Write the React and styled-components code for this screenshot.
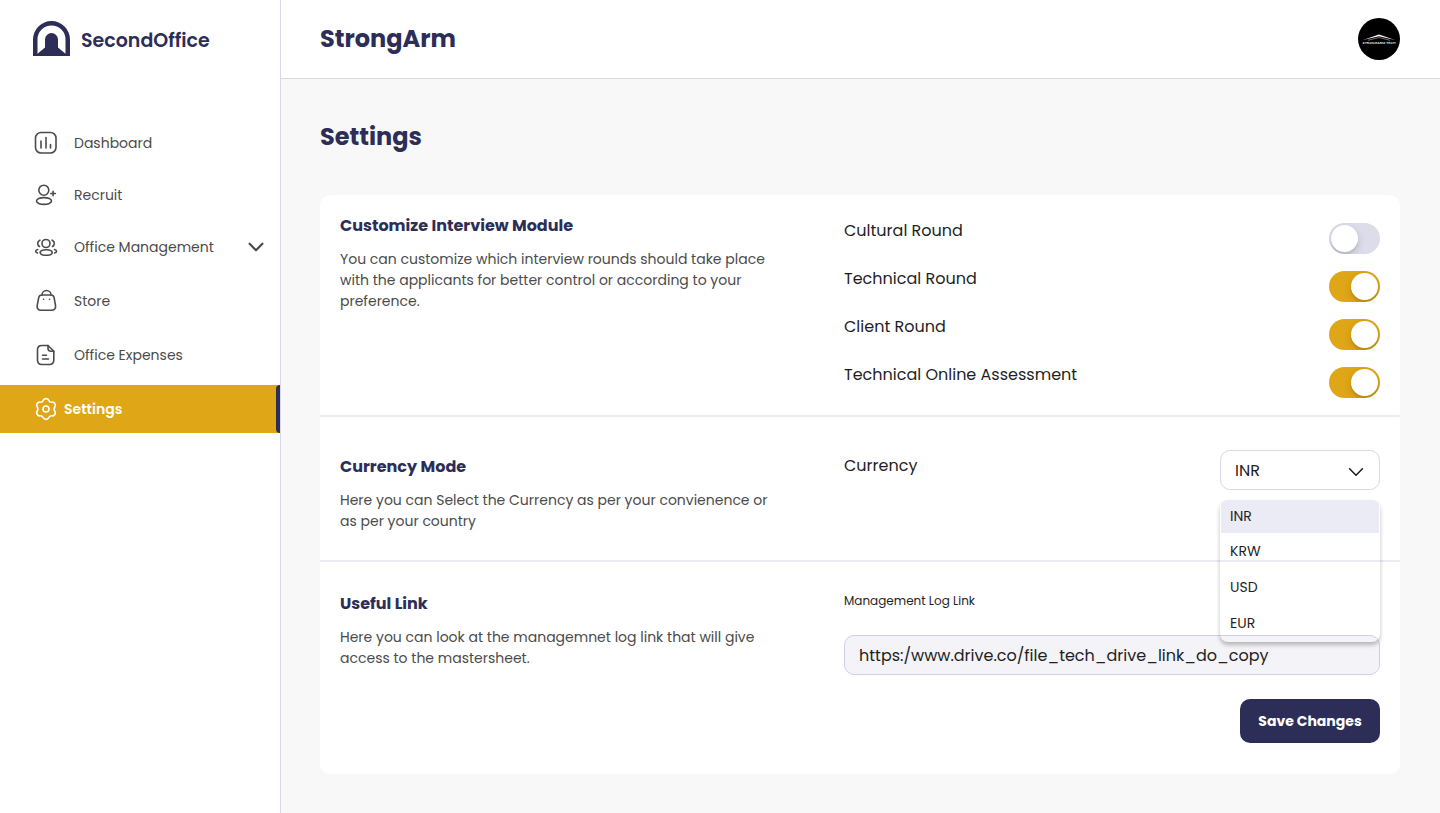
import React, { useState } from 'react';
import styled, { createGlobalStyle, css } from 'styled-components';

const GlobalStyle = createGlobalStyle`
    * {
        box-sizing: border-box;
    }

    body {
        margin: 0;
        background: #f8f8f8;
        color: #1f1f1f;
        font-family: Poppins, Inter, sans-serif;
        font-size: 16px;
    }

    button, input, select {
        font: inherit;
        color: inherit;
    }
`;

const Page = styled.div`
    display: flex;
    min-height: 100vh;
`;

const Sidebar = styled.aside`
    flex: 0 0 281px;
    background: #fff;
    border-right: 1px solid #d8d8e8;
`;

const Brand = styled.a`
    display: flex;
    align-items: flex-end;
    gap: 11px;
    padding: 21px 0 0 33px;
    color: #2c2e58;
    font-size: 19px;
    font-weight: 600;
    line-height: 30px;
    text-decoration: none;
`;

const Nav = styled.nav`
    display: flex;
    flex-direction: column;
    gap: 6px;
    margin-top: 63px;
`;

const NavGroup = styled.div`
    display: flex;
    flex-direction: column;
    gap: ${props => props.$gap};
`;

const NavLink = styled.a`
    display: flex;
    align-items: center;
    gap: 16px;
    height: 48px;
    padding: 0 13px 0 34px;
    color: #4b4b4b;
    font-size: 14px;
    text-decoration: none;

    ${props => props.$active && css`
        position: relative;
        gap: 6px;
        background: #dfa717;
        color: #fff;
        font-weight: 600;

        &::after {
            content: '';
            position: absolute;
            top: 0;
            right: 0;
            bottom: 0;
            width: 4px;
            border-radius: 4px 0 0 4px;
            background: #2c2e58;
        }
    `}
`;

const NavLabel = styled.span`
    flex: 1;
`;

const Main = styled.div`
    flex: 1;
    min-width: 0;
`;

const TopBar = styled.header`
    display: flex;
    align-items: center;
    justify-content: space-between;
    height: 79px;
    padding: 0 40px 0 39px;
    background: #fff;
    border-bottom: 1px solid #d8d8e8;
`;

const Heading = styled.div`
    margin: 0;
    color: #2c2e58;
    font-size: 24px;
    font-weight: 700;
    line-height: 36px;
`;

const Content = styled.main`
    padding: 40px 40px 40px 39px;
`;

const Card = styled.form`
    margin-top: 40px;
    border-radius: 10px;
    background: #fff;
`;

const Section = styled.section`
    display: grid;
    grid-template-columns: 7fr 8fr;
    column-gap: 35px;
    min-height: ${props => props.$height};
    padding: ${props => props.$padding};

    & + & {
        border-top: 2px solid #ebebf3;
    }
`;

const Intro = styled.div`
    padding-top: ${props => props.$top || 0};
`;

const SectionTitle = styled.h2`
    margin: 0 0 12px;
    color: #2c2e58;
    font-size: 16px;
    font-weight: 700;
    line-height: 22px;
`;

const Description = styled.p`
    max-width: 436px;
    margin: 0;
    color: #4b4b4b;
    font-size: 14px;
    line-height: 21px;
`;

const Rounds = styled.div`
    display: flex;
    flex-direction: column;
    gap: 17px;
    padding-top: 8px;
`;

const Row = styled.div`
    display: flex;
    align-items: flex-start;
    justify-content: space-between;
`;

const RowLabel = styled.label`
    line-height: ${props => props.$tall ? '32px' : '16px'};
`;

const Toggle = styled.input.attrs({ type: 'checkbox', role: 'switch' })`
    appearance: none;
    display: flex;
    width: 51px;
    height: 31px;
    margin: 0;
    padding: 2px;
    border-radius: 16px;
    background: #dcdcea;
    overflow: hidden;
    cursor: pointer;

    &::before {
        content: '';
        width: 27px;
        height: 27px;
        border-radius: 50%;
        background: #fff;
        box-shadow: 0 3px 8px rgba(0, 0, 0, 0.15), 0 3px 1px rgba(0, 0, 0, 0.06);
    }

    &:checked {
        justify-content: flex-end;
        background: #dfa717;
    }
`;

const SelectBox = styled.div`
    position: relative;
    width: 160px;

    > svg {
        position: absolute;
        top: 11px;
        right: 13px;
        pointer-events: none;
    }
`;

const Select = styled.select`
    appearance: none;
    width: 100%;
    height: 40px;
    padding: 0 14px;
    border: 1px solid #d8d8e8;
    border-radius: 10px;
    background: #fff;
`;

const Menu = styled.ul`
    position: absolute;
    top: 50px;
    left: 0;
    right: 0;
    z-index: 1;
    margin: 0;
    padding: 0 1px 1px;
    border-radius: 8px;
    box-shadow: 0 3px 4px rgba(0, 0, 0, 0.25);
    list-style: none;
`;

const Option = styled.li`
    height: 36px;
    padding: 0 9px;
    font-size: 14px;
    line-height: 36px;
    cursor: pointer;

    &:first-child {
        height: 33px;
        border-radius: 6px 6px 0 0;
        line-height: 33px;
    }

    ${props => props.$selected && css`
        background: #ebebf5;
    `}
`;

const LinkField = styled.div`
    display: flex;
    flex-direction: column;
    align-items: flex-end;
`;

const LinkLabel = styled.label`
    align-self: stretch;
    margin-bottom: 26px;
    font-size: 12px;
    line-height: 16px;
`;

const LinkInput = styled.input`
    width: 100%;
    height: 40px;
    padding: 0 14px;
    border: 1px solid #d1d1e6;
    border-radius: 10px;
    background: #f3f3f8;
`;

const SaveButton = styled.button`
    width: 140px;
    height: 44px;
    margin-top: 24px;
    padding: 0;
    border: 0;
    border-radius: 10px;
    background: #2c2e58;
    color: #fff;
    font-size: 14px;
    font-weight: 700;
    cursor: pointer;
`;

const Icon = ({ size = 24, width = 1.6, children }) => (
    <svg
        width={size}
        height={size}
        viewBox="0 0 24 24"
        fill="none"
        stroke="currentColor"
        strokeWidth={width}
        strokeLinecap="round"
        strokeLinejoin="round"
        aria-hidden="true"
    >
        {children}
    </svg>
);

const Logo = () => (
    <svg width="37" height="35" viewBox="0 0 37 35" fill="#2c2e58" aria-hidden="true">
        <path
            fillRule="evenodd"
            d="M0 35V18.500a18.500 18.500 0 0 1 37 0V35ZM4.500 32.800 12 26.500V18.500a6.500 6.500 0 0 1 13 0V26.500l7.500 6.300V18.500a14 14 0 0 0-28 0Z"
        />
    </svg>
);

const DashboardIcon = () => (
    <Icon>
        <rect x="1.5" y="1.5" width="20.5" height="20.5" rx="5.5" />
        <path d="M7 10v7M12 6.500v10.500M16.500 13.500v3.500" />
    </Icon>
);

const RecruitIcon = () => (
    <Icon>
        <circle cx="9.8" cy="7.2" r="5" />
        <ellipse cx="10" cy="18" rx="7.500" ry="3.400" />
        <path d="M16.800 10.500h4.600M19.100 8.200v4.600" />
    </Icon>
);

const OfficeIcon = () => (
    <Icon>
        <circle cx="12" cy="8.500" r="4" />
        <ellipse cx="12.200" cy="17.500" rx="6" ry="2.800" />
        <path d="M5.500 11.500c-2.500-1.500-2.500-5 .4-6.300M18.500 11.500c2.500-1.500 2.500-5-.4-6.300M3.500 18c-2.500-.7-2.500-2.900.2-3.500M20.700 18c2.500-.7 2.500-2.900-.2-3.500" />
    </Icon>
);

const StoreIcon = () => (
    <Icon>
        <path d="M8 6h9c1.700 0 2.800 1 3.100 2.700l1.400 7.600c.5 3.100-1.100 5-4 5H7.200c-2.900 0-4.500-1.900-4-5L4.700 8.700C5 7 6.300 6 8 6Z" />
        <path d="M8 6a4.500 4.500 0 0 1 9 0M9.500 10.200h.1M15.500 10.200h.1" />
    </Icon>
);

const ExpensesIcon = () => (
    <Icon>
        <path d="M14 2.500H8C4.800 2.500 3.500 4 3.500 7v10c0 3 1.500 4.500 4.500 4.500h7.300c3 0 4.500-1.500 4.500-4.500V8.300Z" />
        <path d="M14 2.500v2.800c0 2 1 3 3 3h2.800M8.500 12.200h4M8.500 16h6" />
    </Icon>
);

const SettingsIcon = () => (
    <Icon>
        <circle cx="12" cy="12" r="3" />
        <path d="M9.300 3.200c.9-2.100 4.500-2.100 5.400 0 .7 1.700 1.700 2.300 3.500 2 2.300-.3 4 2.800 2.700 4.500-1.100 1.500-1.100 3.100 0 4.600 1.300 1.700-.4 4.800-2.700 4.500-1.800-.3-2.800.3-3.500 2-.9 2.100-4.500 2.100-5.400 0-.7-1.700-1.700-2.300-3.500-2-2.300.3-4-2.800-2.700-4.500 1.100-1.500 1.100-3.100 0-4.600C1.800 8 3.500 4.900 5.800 5.200c1.800.3 2.800-.3 3.500-2Z" />
    </Icon>
);

const ChevronDown = ({ width }) => (
    <Icon size={22} width={width}>
        <path d="m5 8.500 7 7 7-7" />
    </Icon>
);

const Avatar = () => (
    <svg width="42" height="42" viewBox="0 0 42 42" role="img" aria-label="StrongArm Tech">
        <circle cx="21" cy="21" r="21" fill="#000" />
        <path d="m5 22 16-5.500L37 22l-16-3.800Z" fill="#fff" />
        <path d="m10 22.300 11-2.800 11 2.800" fill="none" stroke="#999" strokeWidth="0.7" />
        <text x="21" y="26" fill="#ddd" fontSize="3.6" fontWeight="600" textAnchor="middle">STRONGARM TECH</text>
    </svg>
);

const rounds = [
    { id: 'cultural', label: 'Cultural Round', on: false },
    { id: 'technical', label: 'Technical Round', on: true },
    { id: 'client', label: 'Client Round', on: true },
    { id: 'assessment', label: 'Technical Online Assessment', on: true },
];

const currencies = ['INR', 'KRW', 'USD', 'EUR'];

const SideMenu = () => (
    <Sidebar>
        <Brand href="#"><Logo />SecondOffice</Brand>
        <Nav>
            <NavGroup $gap="4px">
                <NavLink href="#"><DashboardIcon /><NavLabel>Dashboard</NavLabel></NavLink>
                <NavLink href="#"><RecruitIcon /><NavLabel>Recruit</NavLabel></NavLink>
                <NavLink href="#">
                    <OfficeIcon />
                    <NavLabel>Office Management</NavLabel>
                    <ChevronDown width={2.4} />
                </NavLink>
            </NavGroup>
            <NavGroup $gap="6px">
                <NavLink href="#"><StoreIcon /><NavLabel>Store</NavLabel></NavLink>
                <NavLink href="#"><ExpensesIcon /><NavLabel>Office Expenses</NavLabel></NavLink>
                <NavLink href="#" $active aria-current="page"><SettingsIcon /><NavLabel>Settings</NavLabel></NavLink>
            </NavGroup>
        </Nav>
    </Sidebar>
);

const CurrencySelect = () => {
    const [currency, setCurrency] = useState('INR');
    const [open, setOpen] = useState(true);

    // keep the native popup closed, the menu below takes its place
    const toggle = (e) => {
        e.preventDefault();
        setOpen(!open);
    };

    const pick = (code) => {
        setCurrency(code);
        setOpen(false);
    };

    return (
        <SelectBox>
            <Select id="currency" value={currency} onMouseDown={toggle} onChange={e => setCurrency(e.target.value)}>
                {currencies.map(code => <option key={code}>{code}</option>)}
            </Select>
            <ChevronDown width={1.7} />
            {open && (
                <Menu role="listbox" aria-label="Currency">
                    {currencies.map(code => (
                        <Option
                            key={code}
                            role="option"
                            aria-selected={code === currency}
                            $selected={code === currency}
                            onClick={() => pick(code)}
                        >
                            {code}
                        </Option>
                    ))}
                </Menu>
            )}
        </SelectBox>
    );
};

const App = () => (
    <Page>
        <GlobalStyle />
        <SideMenu />
        <Main>
            <TopBar>
                <Heading>StrongArm</Heading>
                <Avatar />
            </TopBar>
            <Content>
                <Heading as="h1">Settings</Heading>
                <Card onSubmit={e => e.preventDefault()}>
                    <Section $height="220px" $padding="20px 20px 16px">
                        <Intro>
                            <SectionTitle>Customize Interview Module</SectionTitle>
                            <Description>
                                You can customize which interview rounds should take place with the applicants for
                                better control or according to your preference.
                            </Description>
                        </Intro>
                        <Rounds>
                            {rounds.map(({ id, label, on }) => (
                                <Row key={id}>
                                    <RowLabel htmlFor={id}>{label}</RowLabel>
                                    <Toggle id={id} defaultChecked={on} />
                                </Row>
                            ))}
                        </Rounds>
                    </Section>
                    <Section $height="145px" $padding="33px 20px 24px">
                        <Intro $top="6px">
                            <SectionTitle>Currency Mode</SectionTitle>
                            <Description>
                                Here you can Select the Currency as per your convienence or as per your country
                            </Description>
                        </Intro>
                        <Row>
                            <RowLabel htmlFor="currency" $tall>Currency</RowLabel>
                            <CurrencySelect />
                        </Row>
                    </Section>
                    <Section $height="213px" $padding="31px 20px">
                        <Intro>
                            <SectionTitle>Useful Link</SectionTitle>
                            <Description>
                                Here you can look at the managemnet log link that will give access to the mastersheet.
                            </Description>
                        </Intro>
                        <LinkField>
                            <LinkLabel htmlFor="log-link">Management Log Link</LinkLabel>
                            <LinkInput id="log-link" defaultValue="https:/www.drive.co/file_tech_drive_link_do_copy" />
                            <SaveButton type="submit">Save Changes</SaveButton>
                        </LinkField>
                    </Section>
                </Card>
            </Content>
        </Main>
    </Page>
);

export default App;
